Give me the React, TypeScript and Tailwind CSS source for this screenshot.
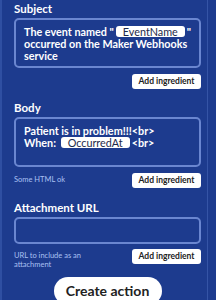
import React from "react";

const font = { fontFamily: "Lato, 'Noto Sans', sans-serif" };

function Pill({ children }: { children: React.ReactNode }) {
  return (
    <span className="mx-[2px] inline-block rounded-[3px] bg-white px-[7px] font-normal leading-[11px] text-[#1d2a4a]">
      {children}
    </span>
  );
}

function AddBtn() {
  return (
    <div className="flex h-[15px] w-[69px] items-center justify-center rounded-[3px] bg-white text-[8.5px] font-bold text-[#222]">
      Add ingredient
    </div>
  );
}

export default function App() {
  return (
    <div
      className="relative h-[300px] w-[216px] overflow-hidden bg-[#1d3b8e] text-white"
      style={font}
    >
      <div className="absolute left-0 top-0 h-full w-[2px] bg-[#2f4fa2]" />
      <div className="absolute left-[207px] top-0 h-full w-[1px] bg-[#3554a6]" />
      <div className="flex flex-col pl-[14px] pr-[15px] pt-[2px]">
        <div className="text-[11.5px] font-bold leading-[13px]">Subject</div>
        <div className="mt-[3px] h-[50px] rounded-[5px] border-2 border-[#6a86d0] pl-[8px] pr-[3px] pt-[6px] text-[10.8px] font-bold leading-[12px]">
          The event named "<Pill>EventName</Pill>" occurred on the Maker Webhooks service
        </div>
        <div className="mt-[6px] flex justify-end">
          <AddBtn />
        </div>

        <div className="mt-[12px] text-[11.5px] font-bold leading-[13px]">Body</div>
        <div className="mt-[3px] h-[50px] rounded-[5px] border-2 border-[#6a86d0] pl-[8px] pr-[3px] pt-[6px] text-[10.8px] font-bold leading-[12px]">
          <div>Patient is in problem!!!&lt;br&gt;</div>
          <div>
            When: <Pill>OccurredAt</Pill>&lt;br&gt;
          </div>
        </div>
        <div className="mt-[6px] flex h-[15px] items-start justify-between">
          <div className="pt-[2px] text-[7.5px] leading-[9px] text-[#a9c0f2]">Some HTML ok</div>
          <AddBtn />
        </div>

        <div className="mt-[13px] text-[11.5px] font-bold leading-[13px]">Attachment URL</div>
        <div className="mt-[3px] h-[27px] rounded-[5px] border-2 border-[#6a86d0]" />
        <div className="mt-[5px] flex items-start justify-between">
          <div className="w-[80px] pt-[2px] text-[7.5px] leading-[9px] text-[#a9c0f2]">
            URL to include as an attachment
          </div>
          <AddBtn />
        </div>
        <div className="mt-[8px] flex justify-center">
          <div className="flex h-[28px] w-[108px] items-start justify-center rounded-full bg-white pt-[3px] text-[14px] font-bold text-[#222]">
            Create action
          </div>
        </div>
      </div>
    </div>
  );
}
